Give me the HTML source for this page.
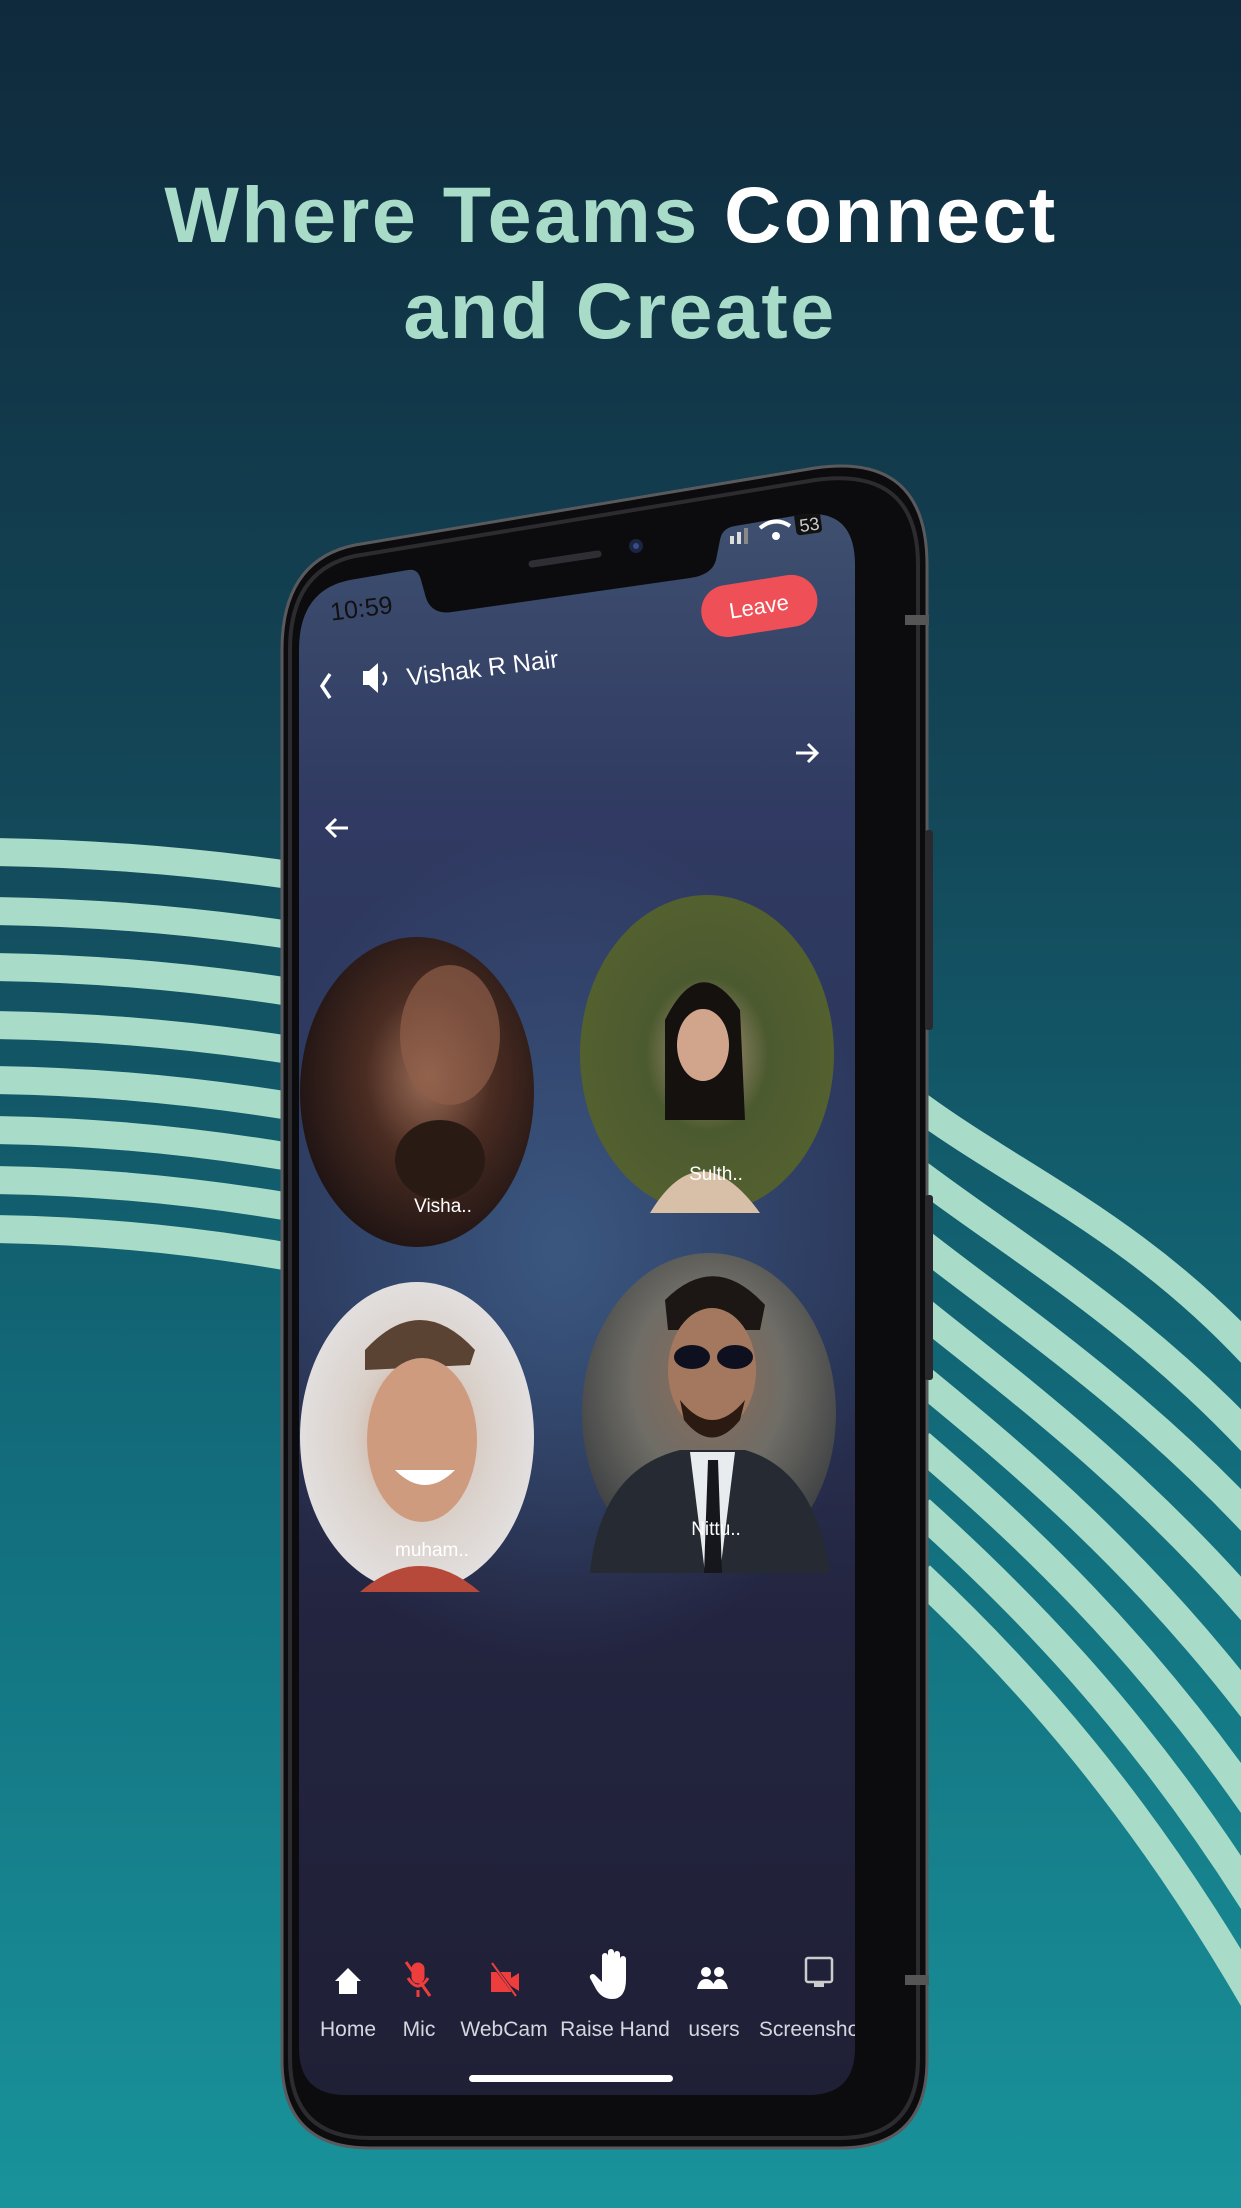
<!DOCTYPE html>
<html><head><meta charset="utf-8"><style>
html,body{margin:0;padding:0;width:1241px;height:2208px;overflow:hidden}
svg{display:block}
</style></head><body>
<svg width="1241" height="2208" viewBox="0 0 1241 2208" xmlns="http://www.w3.org/2000/svg" font-family="Liberation Sans, sans-serif">
<defs>
<linearGradient id="bg" x1="0" y1="0" x2="0" y2="1">
<stop offset="0" stop-color="#0f2a3c"/>
<stop offset="0.35" stop-color="#134657"/>
<stop offset="0.65" stop-color="#126b7a"/>
<stop offset="1" stop-color="#19939b"/>
</linearGradient>
<linearGradient id="scr" x1="0" y1="0" x2="0" y2="1">
<stop offset="0" stop-color="#3f5170"/>
<stop offset="0.2" stop-color="#303a62"/>
<stop offset="0.5" stop-color="#2a3658"/>
<stop offset="0.7" stop-color="#23243f"/>
<stop offset="1" stop-color="#1f2036"/>
</linearGradient>
<radialGradient id="glow" cx="0.5" cy="0.5" r="0.5">
<stop offset="0" stop-color="#3e5f8a" stop-opacity="0.8"/>
<stop offset="1" stop-color="#3e5f8a" stop-opacity="0"/>
</radialGradient>
<radialGradient id="p1" cx="0.55" cy="0.45" r="0.6">
<stop offset="0" stop-color="#9c6d57"/><stop offset="0.45" stop-color="#4a2c22"/><stop offset="1" stop-color="#1c1212"/>
</radialGradient>
<radialGradient id="p2" cx="0.5" cy="0.5" r="0.6">
<stop offset="0" stop-color="#b59a80"/><stop offset="0.4" stop-color="#4c5a30"/><stop offset="1" stop-color="#56622e"/>
</radialGradient>
<radialGradient id="p3" cx="0.5" cy="0.5" r="0.6">
<stop offset="0" stop-color="#c49a80"/><stop offset="0.45" stop-color="#d9cfc8"/><stop offset="1" stop-color="#e6e6e8"/>
</radialGradient>
<radialGradient id="p4" cx="0.5" cy="0.4" r="0.6">
<stop offset="0" stop-color="#8a6a58"/><stop offset="0.5" stop-color="#6f6d66"/><stop offset="1" stop-color="#3a3d40"/>
</radialGradient>
<clipPath id="sc"><path d="M299 650 Q299 590 350 580 L408 570 Q418 568 421 580 L426 598 Q432 615 452 612 L690 578 Q712 575 716 560 L720 540 Q722 528 735 526 L800 515 Q855 507 855 565 L855 2048 Q855 2095 808 2095 L346 2095 Q299 2095 299 2048 Z"/></clipPath>
</defs>
<rect width="1241" height="2208" fill="url(#bg)"/>

<!-- left stripes -->
<g fill="none" stroke="#a8dcc8" stroke-width="28">
<path d="M-5 852 Q140 854 290 875"/>
<path d="M-5 911 Q140 913 290 935"/>
<path d="M-5 967 Q140 969 290 992"/>
<path d="M-5 1025 Q140 1027 290 1050"/>
<path d="M-5 1080 Q140 1082 290 1106"/>
<path d="M-5 1130 Q140 1132 290 1157"/>
<path d="M-5 1180 Q140 1182 290 1207"/>
<path d="M-5 1229 Q140 1231 290 1257"/>
</g>
<!-- right arcs -->
<g fill="none" stroke="#a8dcc8" stroke-width="29">
<path d="M920 1107 C1020 1180 1140 1230 1260 1362"/>
<path d="M920 1175 C1020 1250 1140 1320 1260 1450"/>
<path d="M920 1242 C1020 1320 1140 1400 1260 1530"/>
<path d="M920 1310 C1020 1390 1140 1480 1260 1620"/>
<path d="M920 1378 C1020 1460 1140 1560 1260 1718"/>
<path d="M920 1444 C1020 1530 1140 1640 1260 1815"/>
<path d="M920 1510 C1020 1600 1140 1720 1260 1912"/>
<path d="M920 1576 C1020 1670 1140 1800 1260 2010"/>
</g>

<!-- title -->
<text x="611" y="242" text-anchor="middle" font-size="79" font-weight="bold" letter-spacing="2.5" fill="#a8dcc8">Where Teams <tspan fill="#ffffff">Connect</tspan></text>
<text x="620" y="338" text-anchor="middle" font-size="79" font-weight="bold" letter-spacing="2.5" fill="#a8dcc8">and Create</text>

<!-- phone body -->
<path d="M282 650 Q282 560 355 545 L815 468 Q927 452 927 565 L927 2060 Q927 2148 840 2148 L370 2148 Q282 2148 282 2060 Z" fill="#0c0c0e" stroke="#5a5a5e" stroke-width="3"/>
<path d="M290 650 Q290 570 355 556 L815 480 Q918 466 918 565 L918 2058 Q918 2138 840 2138 L370 2138 Q290 2138 290 2058 Z" fill="none" stroke="#2c2c30" stroke-width="4"/>
<rect x="925" y="830" width="8" height="200" rx="3" fill="#2a2a2e"/>
<rect x="925" y="1195" width="8" height="185" rx="3" fill="#2a2a2e"/>
<rect x="905" y="615" width="24" height="10" fill="#555"/>
<rect x="905" y="1975" width="24" height="10" fill="#555"/>

<!-- screen -->
<g clip-path="url(#sc)">
<rect x="290" y="490" width="580" height="1620" fill="url(#scr)"/>
<ellipse cx="560" cy="1250" rx="330" ry="420" fill="url(#glow)"/>

<text x="330" y="617" font-size="25" fill="#111" transform="rotate(-7 360 608)">10:59</text>
<rect x="730" y="536" width="4" height="8" fill="#ddd"/><rect x="737" y="532" width="4" height="12" fill="#ddd"/><rect x="744" y="528" width="4" height="16" fill="#888"/>
<path d="M760 528 Q775 516 790 526" stroke="#fff" stroke-width="4" fill="none"/><circle cx="776" cy="536" r="4" fill="#fff"/>
<rect x="795" y="510" width="26" height="24" rx="4" fill="#111" transform="rotate(-8 808 522)"/>
<text x="799" y="531" font-size="18" fill="#ccc" transform="rotate(-8 808 522)">53</text>

<g transform="rotate(-9 759 607)">
<rect x="701" y="580" width="117" height="52" rx="26" fill="#ef4f56"/>
<text x="759" y="614" text-anchor="middle" font-size="22" fill="#fff">Leave</text>
</g>
<path d="M330 674 L322 686 L330 698" stroke="#fff" stroke-width="3.5" fill="none"/>
<path d="M363 671 h6 l9 -8 v30 l-9 -8 h-6 z" fill="#fff"/>
<path d="M383 672 Q389 678 383 685" stroke="#fff" stroke-width="2.5" fill="none"/>
<text x="406" y="678" font-size="25" fill="#fff" transform="rotate(-7 470 665)">Vishak R Nair</text>
<path d="M796 753 h20 M808 744 l9 9 l-9 9" stroke="#fff" stroke-width="3" fill="none"/>
<path d="M348 828 h-20 M336 819 l-9 9 l9 9" stroke="#fff" stroke-width="3" fill="none"/>

<ellipse cx="417" cy="1092" rx="117" ry="155" fill="url(#p1)"/>
<ellipse cx="450" cy="1035" rx="50" ry="70" fill="#8e5e48" opacity="0.7"/>
<ellipse cx="440" cy="1160" rx="45" ry="40" fill="#2a1a14"/>
<text x="443" y="1212" text-anchor="middle" font-size="19" fill="#fff">Visha..</text>

<ellipse cx="707" cy="1054" rx="127" ry="159" fill="url(#p2)"/>
<path d="M665 1020 Q700 950 740 1010 L745 1120 L665 1120 Z" fill="#15110f"/>
<ellipse cx="703" cy="1045" rx="26" ry="36" fill="#d1a58c"/>
<path d="M650 1213 Q700 1130 760 1213 Z" fill="#d8c0a8"/>
<text x="716" y="1180" text-anchor="middle" font-size="19" fill="#fff">Sulth..</text>

<ellipse cx="417" cy="1437" rx="117" ry="155" fill="url(#p3)"/>
<path d="M365 1350 Q420 1290 475 1350 L470 1365 L365 1370 Z" fill="#5a4332"/>
<ellipse cx="422" cy="1440" rx="55" ry="82" fill="#cf9b7f"/>
<path d="M395 1470 Q425 1500 455 1470 Z" fill="#fff"/>
<path d="M360 1592 Q420 1540 480 1592 Z" fill="#b6493a"/>
<text x="432" y="1556" text-anchor="middle" font-size="19" fill="#fff">muham..</text>

<ellipse cx="709" cy="1413" rx="127" ry="160" fill="url(#p4)"/>
<path d="M665 1300 Q715 1250 765 1305 L760 1330 L668 1330 Z" fill="#1c1614"/>
<ellipse cx="712" cy="1370" rx="44" ry="62" fill="#a4785e"/>
<ellipse cx="692" cy="1357" rx="18" ry="12" fill="#0e1020"/><ellipse cx="735" cy="1357" rx="18" ry="12" fill="#0e1020"/>
<path d="M680 1400 Q712 1440 745 1400 L740 1420 Q712 1455 684 1420 Z" fill="#2a1a12"/>
<path d="M590 1573 Q600 1470 680 1450 L745 1450 Q815 1470 830 1573 Z" fill="#262b33"/>
<path d="M690 1452 L735 1452 L720 1573 L705 1573 Z" fill="#e8ecef"/>
<path d="M708 1460 L718 1460 L722 1573 L704 1573 Z" fill="#15171c"/>
<text x="716" y="1535" text-anchor="middle" font-size="19" fill="#fff">Nittu..</text>

<path d="M348 1968 L361 1981 L357 1981 L357 1994 L339 1994 L339 1981 L335 1981 Z" fill="#fff"/>
<g stroke="#ee3d3d" stroke-width="3" fill="none">
<rect x="413" y="1964" width="10" height="18" rx="5" fill="#ee3d3d"/>
<path d="M408 1978 Q418 1994 428 1978 M418 1990 v7 M406 1962 L430 1996"/>
</g>
<rect x="491" y="1972" width="20" height="20" fill="#ee3d3d"/><path d="M511 1978 l8 -5 v18 l-8 -5 z" fill="#ee3d3d"/>
<path d="M491 1962 L518 1998" stroke="#1f2036" stroke-width="3"/>
<path d="M492 1963 L516 1996" stroke="#ee3d3d" stroke-width="2"/>
<path d="M602 1975 v-19 a3 3 0 0 1 6 0 v15 v-19 a3 3 0 0 1 6 0 v19 v-17 a3 3 0 0 1 6 0 v17 v-12 a3 3 0 0 1 6 0 v20 q0 20 -14 20 q-10 0 -16 -10 l-6 -11 a3 3 0 0 1 5 -3 l7 7 z" fill="#fff"/>
<circle cx="706" cy="1972" r="5" fill="#fff"/><circle cx="719" cy="1972" r="5" fill="#fff"/>
<path d="M697 1989 q2 -10 9 -10 q7 0 9 10 z M712 1989 q2 -10 7 -10 q7 0 9 10 z" fill="#fff"/>
<rect x="806" y="1958" width="26" height="24" rx="2" stroke="#ccc" stroke-width="2.5" fill="none"/>
<rect x="814" y="1983" width="10" height="4" fill="#ccc"/>
<g font-size="21" fill="#d6d6de" text-anchor="middle">
<text x="348" y="2036">Home</text>
<text x="419" y="2036">Mic</text>
<text x="504" y="2036">WebCam</text>
<text x="615" y="2036">Raise Hand</text>
<text x="714" y="2036">users</text>
<text x="812" y="2036">Screenshot</text>
</g>
<rect x="469" y="2075" width="204" height="7" rx="3.5" fill="#fff"/>
</g>
<path d="M532 564 L598 554" stroke="#2e2e34" stroke-width="7" stroke-linecap="round"/>
<circle cx="636" cy="546" r="7" fill="#1b2440"/><circle cx="636" cy="546" r="3" fill="#3a4c8a"/>
</svg>
</body></html>
